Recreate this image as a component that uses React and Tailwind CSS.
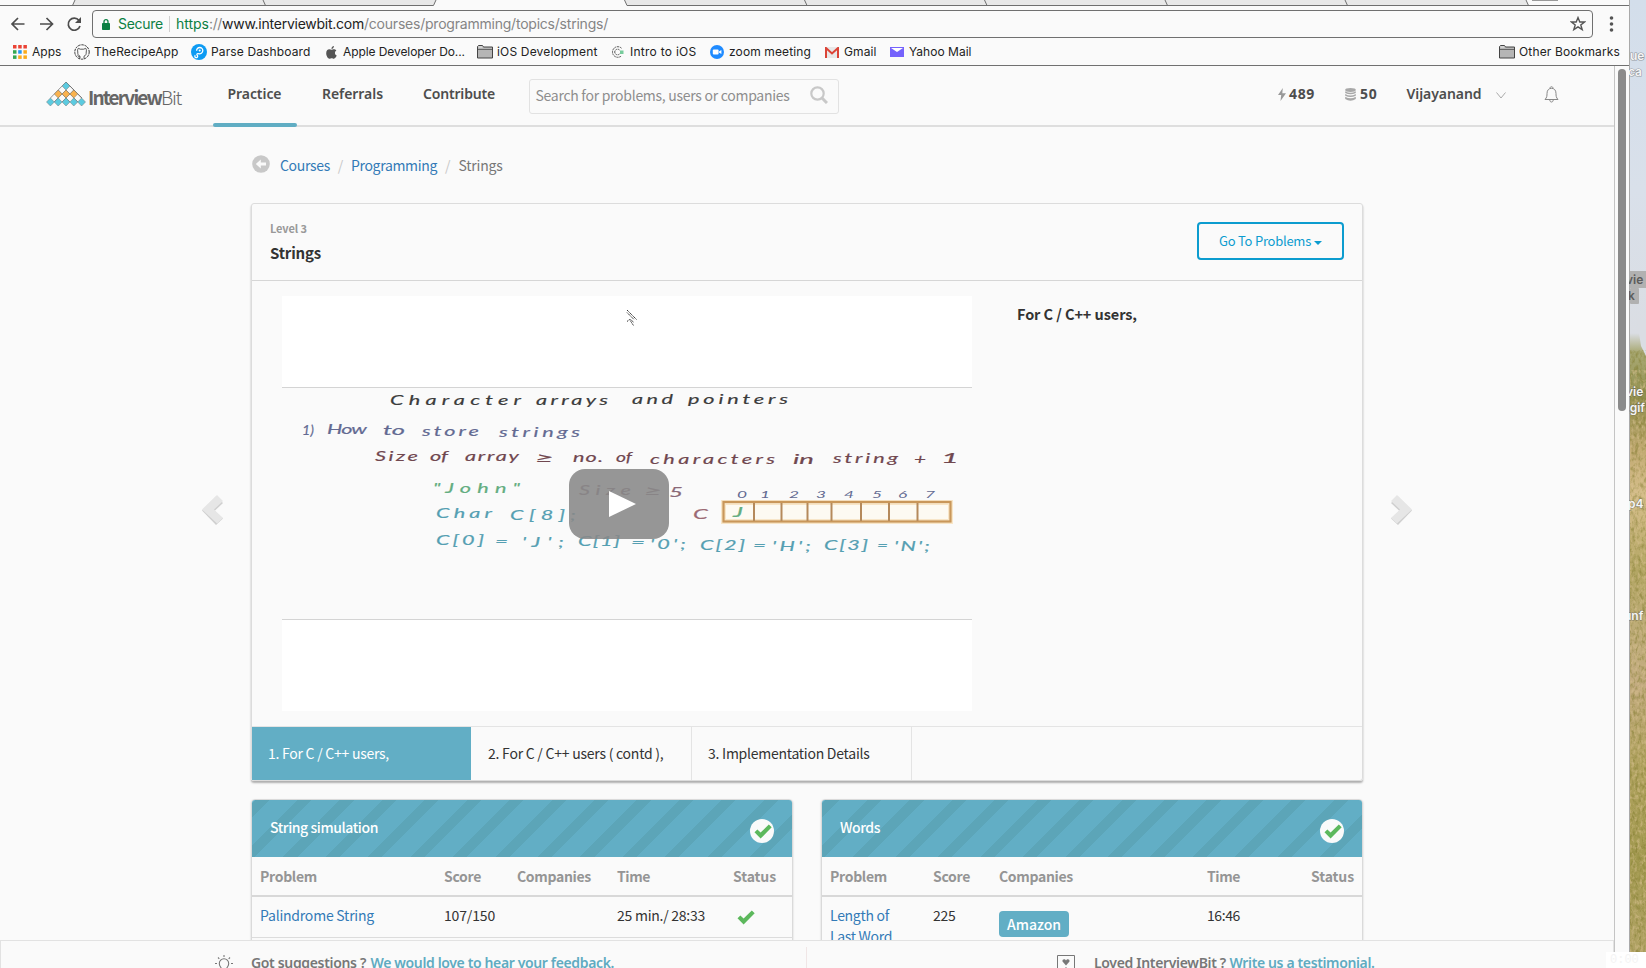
import { useLayoutEffect, useRef } from "react";

const SANS = "font-['Noto_Sans_CJK_SC',sans-serif]";
const ROUND = "font-['Noto_Sans','Open_Sans',sans-serif]";
const CHROME = "font-['Inter',sans-serif]";

/* Text set to a known width: the tracking is worked out from the natural width. */
function Fit({ w, className = "", children }) {
  const ref = useRef(null);
  useLayoutEffect(() => {
    const el = ref.current;
    el.style.letterSpacing = "0px";
    const natural = el.getBoundingClientRect().width;
    el.style.letterSpacing = `${(w - natural) / el.textContent.length}px`;
  }, [w]);
  return (
    <span ref={ref} className={`inline-block whitespace-pre ${className}`}>
      {children}
    </span>
  );
}

const Check = ({ className }) => (
  <svg viewBox="0 0 18 15" className={className}>
    <path d="M0.5 8.3 3.4 5.4 6.6 8.6 14.8 0.4 17.7 3.3 6.6 14.6Z" fill="#5cb85c" />
  </svg>
);

const Folder = () => (
  <svg width="16" height="14" viewBox="0 0 16 14">
    <path d="M.5 13V1.5L1.5.5h4l1 1.5h9v11z" fill="#b5b5b5" stroke="#444" />
    <path d="M1 4.5h14" stroke="#666" />
    <path d="M1.5 2h4" stroke="#eee" />
  </svg>
);

function TabStrip() {
  return (
    <svg width="1629" height="6" className="block shrink-0">
      <path d="M72.500 5.500 75 0H436L433.500 5.500ZM627 5.500 624.500 0H1526L1528.500 5.500Z" fill="#e8e8e8" />
      <path
        d="M0 5.500H433.500L436 0M72.500 5.500 75 0M263 0 265.500 5.500M624.500 0 627 5.500H1629M804.500 0 807 5.500M984.500 0 987 5.500M1165 0 1167.500 5.500M1345 0 1347.500 5.500M1526 0 1528.500 5.500"
        fill="none"
        stroke="#6f6f6f"
      />
      <path d="M1532 .5H1558" stroke="#999" />
    </svg>
  );
}

function Toolbar() {
  return (
    <div className={`flex h-[36px] items-center ${CHROME}`}>
      <svg width="92" height="36" viewBox="0 6 92 36" fill="none" stroke="#4d4d4d" strokeWidth="1.7" className="shrink-0">
        <path d="M24.500 24H12.500M18 18 12 24 18 30M40 24H52M46.500 18 52.500 24 46.500 30" />
        <path d="M79 20.500A6 6 0 1 0 80 26" />
        <path d="M81 17V23H75Z" fill="#4d4d4d" stroke="none" />
      </svg>
      <div className="flex h-[28px] w-[1501px] items-center rounded-[4px] border border-[#707070] text-[14px] leading-[26px]">
        <svg width="8" height="11" viewBox="0 0 8 11" className="ml-[9px]">
          <rect y="4" width="8" height="7" rx=".8" fill="#0b8043" />
          <path d="M2 4.500V2.700a2 2 0 0 1 4 0V4.500" fill="none" stroke="#0b8043" strokeWidth="1.300" />
        </svg>
        <Fit w={45} className="ml-[8px] text-[#0b8043]">Secure</Fit>
        <span className="ml-[6px] mr-[6px] h-[16px] w-px bg-[#d0d0d0]" />
        <Fit w={33} className="text-[#0b8043]">https</Fit>
        <Fit w={13} className="text-[#858585]">://</Fit>
        <Fit w={142} className="text-[#222]">www.interviewbit.com</Fit>
        <Fit w={244} className="text-[#858585]">/courses/programming/topics/strings/</Fit>
        <svg width="16" height="16" viewBox="0 0 16 16" className="ml-auto mr-[6px]">
          <path d="M8 1.600 9.800 6H14.500L10.800 8.900 12.200 13.600 8 10.800 3.800 13.600 5.200 8.900 1.500 6H6.200Z" fill="none" stroke="#555" strokeWidth="1.400" />
        </svg>
      </div>
      <svg width="5" height="16" className="ml-[16px]" fill="#555">
        <circle cx="2.500" cy="2" r="1.800" />
        <circle cx="2.500" cy="8" r="1.800" />
        <circle cx="2.500" cy="14" r="1.800" />
      </svg>
    </div>
  );
}

const dots = ["#ea4335", "#ea4335", "#ea4335", "#34a853", "#2196f3", "#fbab1a", "#34a853", "#fbab1a", "#fbab1a"];

const bookmarks = [
  {
    label: "Apps", w: 29.500, box: "w-[61px]", iconBox: "w-[19px]",
    icon: (
      <svg width="14" height="14" viewBox="0 0 14 14">
        {dots.map((c, i) => (
          <rect key={i} x={(i % 3) * 5.2} y={Math.floor(i / 3) * 5.2} width="3.500" height="3.500" fill={c} />
        ))}
      </svg>
    ),
  },
  {
    label: "TheRecipeApp", w: 84.500, box: "w-[117px]", iconBox: "w-[20px]",
    icon: (
      <svg width="16" height="16" viewBox="0 0 16 16" fill="none" stroke="#333">
        <circle cx="8" cy="8" r="7.200" strokeDasharray="2.500 .8" />
        <path d="M6 14.500V12.200C4 11.500 3.600 9.800 3.800 8 3.300 6.500 3.700 5 4.300 4.300L6.300 5.200H9.700L11.700 4.300C12.300 5 12.700 6.500 12.200 8 12.400 9.800 12 11.500 10 12.200V14.500M6 13C4.500 13 4.300 12 3.500 11.600" strokeWidth=".8" />
      </svg>
    ),
  },
  {
    label: "Parse Dashboard", w: 99.500, box: "w-[135px]", iconBox: "w-[20px]",
    icon: (
      <svg width="16" height="16" viewBox="0 0 16 16">
        <circle cx="8" cy="8" r="8" fill="#0d9bf3" />
        <path d="M4.300 11.200a1.400 1.400 0 1 0 1.900 0C5.500 10.500 6 9.500 7.200 9.700 9.500 10.200 11.800 9 11.800 6.600 11.800 4.800 10.500 3.500 8.700 3.500 6.800 3.500 5.600 5 5.600 6.800" fill="none" stroke="#fff" strokeWidth="1.300" />
        <circle cx="8.700" cy="6.600" r="1" fill="#fff" />
      </svg>
    ),
  },
  {
    label: "Apple Developer Do...", w: 122, box: "w-[151px]", iconBox: "w-[17px]",
    icon: (
      <svg width="11" height="13" viewBox="0 0 11 13" fill="#555">
        <path d="M7.700 3.200C6.700 3.200 6.200 3.700 5.600 3.700 5 3.700 4.300 3.200 3.400 3.200 1.500 3.200.2 4.800.2 7.200.2 9.700 1.900 12.700 3.500 12.700 4.300 12.700 4.700 12.200 5.700 12.200 6.600 12.200 6.900 12.700 7.800 12.700 9.200 12.700 10.300 10.700 10.700 9.500 8.400 8.500 8.500 5.300 10.400 4.500 9.700 3.600 8.800 3.200 7.700 3.200ZM5.500 3C5.400 1.500 6.400.3 7.900.1 8.100 1.600 6.900 3 5.500 3Z" />
      </svg>
    ),
  },
  { label: "iOS Development", w: 100.500, box: "w-[134px]", iconBox: "w-[20px]", icon: <Folder /> },
  {
    label: "Intro to iOS", w: 66.500, box: "w-[99px]", iconBox: "w-[19px]",
    icon: (
      <svg width="14" height="14" viewBox="0 0 14 14" fill="none">
        <path d="M10.500 3.200A5.300 5.300 0 1 0 10.500 10.800M8.500 5A2.800 2.800 0 1 0 8.500 9" stroke="#555" strokeDasharray="2 .7" />
        <rect x="9" y="5.500" width="3.500" height="3.500" fill="#77cc9c" />
      </svg>
    ),
  },
  {
    label: "zoom meeting", w: 82, box: "w-[115px]", iconBox: "w-[19px]",
    icon: (
      <svg width="14" height="14" viewBox="0 0 14 14">
        <circle cx="7" cy="7" r="7" fill="#1f8bff" />
        <rect x="2.800" y="4.600" width="5.800" height="4.800" rx="1" fill="#fff" />
        <path d="M9 6.600 11.400 4.900V9.100L9 7.400Z" fill="#fff" />
      </svg>
    ),
  },
  {
    label: "Gmail", w: 32.500, box: "w-[65px]", iconBox: "w-[19px]",
    icon: (
      <svg width="14" height="11" viewBox="0 0 14 11">
        <rect width="14" height="11" fill="#e8e8e8" />
        <path d="M1 11V1L7 6.500 13 1V11" fill="none" stroke="#db4437" strokeWidth="2" />
      </svg>
    ),
  },
  {
    label: "Yahoo Mail", w: 62.500, box: "w-[90px]", iconBox: "w-[19px]",
    icon: (
      <svg width="14" height="10" viewBox="0 0 14 10">
        <rect width="14" height="10" fill="#7562fc" />
        <path d="M1 1H13L7 5Z" fill="#fff" />
      </svg>
    ),
  },
];

function BookmarkBar() {
  return (
    <div className={`flex h-[24px] items-center border-b border-[#707070] pb-[3px] pl-[13px] pr-[9px] text-[12px] leading-[18px] text-[#222] ${CHROME}`}>
      {bookmarks.map((b) => (
        <div key={b.label} className={`flex shrink-0 items-center ${b.box}`}>
          <span className={`shrink-0 ${b.iconBox}`}>{b.icon}</span>
          <Fit w={b.w}>{b.label}</Fit>
        </div>
      ))}
      <div className="ml-auto flex items-center gap-[4px]">
        <Folder />
        <Fit w={101}>Other Bookmarks</Fit>
      </div>
    </div>
  );
}

const logoCells = [
  [20, 4, "#5ccbe0"],
  [12.2, 12, "#f9b24e"], [20, 12, "#f9b24e"], [27.8, 12, "#f9b24e"],
  [4.4, 20, "#5ccbe0"], [12.2, 20, "#5ccbe0"], [20, 20, "#5ccbe0"], [27.8, 20, "#5ccbe0"], [35.6, 20, "#5ccbe0"],
];

function Logo() {
  return (
    <div className="flex w-[167px] items-center pl-[46px]">
      <svg width="40" height="25" viewBox="0 0 40 25" className="-mt-[2px] shrink-0">
        <path d="M4.400 16 20 0 35.600 16M12.200 8 24 20M27.800 8 16 20M20 0 36 16M8 20 20 8 32 20" fill="none" stroke="#666" strokeWidth=".7" />
        {logoCells.map(([x, y, c]) => (
          <path key={`${x}-${y}`} d={`M${x} ${y - 4}L${x + 3.9} ${y}L${x} ${y + 4}L${x - 3.9} ${y}Z`} fill={c} stroke="#777" strokeWidth=".5" />
        ))}
      </svg>
      <span className={`ml-[2px] mt-[3px] flex text-[19px] leading-[24px] text-[#666] ${SANS}`}>
        <Fit w={73} className="font-bold">Interview</Fit>
        <Fit w={20} className="font-light">Bit</Fit>
      </span>
    </div>
  );
}

function SiteHeader() {
  return (
    <div className={`flex h-[61px] shrink-0 items-stretch border-b-2 border-[#dedede] text-[14px] font-semibold text-[#4d4d4d] ${ROUND}`}>
      <Logo />
      <div className="relative ml-[46px] w-[84px] pl-[14.500px] pt-[18px] leading-[20px]">
        <Fit w={54}>Practice</Fit>
        <span className="absolute -bottom-[2px] left-0 h-[4px] w-[84px] rounded-[2px] bg-[#60adc3]" />
      </div>
      <div className="ml-[25px] w-[101px] pt-[18px] leading-[20px]"><Fit w={61}>Referrals</Fit></div>
      <div className="w-[106px] pt-[18px] leading-[20px]"><Fit w={72}>Contribute</Fit></div>
      <div className={`mt-[13px] flex h-[35px] w-[310px] items-center justify-between rounded-[3px] border border-[#e2e2e2] pl-[5.500px] pr-[10px] text-[14px] font-normal leading-[30px] text-[#8e8e8e] ${SANS}`}>
        <Fit w={254} className="-mt-[3px]">Search for problems, users or companies</Fit>
        <svg width="18" height="18" viewBox="0 0 18 18" fill="none" stroke="#c8c8c8" strokeWidth="2.200" className="mb-[3px]">
          <circle cx="7.500" cy="7.500" r="6.200" />
          <path d="M12 12 17 17" strokeWidth="3" />
        </svg>
      </div>
      <div className="ml-[439px] flex h-[56px] items-center leading-[20px]">
        <svg width="8" height="13" viewBox="0 0 8 13" fill="#999"><path d="M4.800 0 0 7H3.200L2.500 13 8 5.200H4.300Z" /></svg>
        <Fit w={26} className="ml-[3px] font-bold">489</Fit>
        <svg width="11" height="13" viewBox="0 0 11 13" fill="#a8a8a8" className="ml-[30px]">
          <ellipse cx="5.500" cy="2" rx="5.300" ry="1.900" />
          <path d="M.2 3.300Q5.500 6.300 10.800 3.300V5Q5.500 7.700.2 5ZM.2 6Q5.500 9 10.800 6V7.700Q5.500 10.400.2 7.700ZM.2 8.800Q5.500 11.800 10.800 8.800V11Q5.500 14.500.2 11Z" />
        </svg>
        <Fit w={17.500} className="ml-[4px] font-bold">50</Fit>
        <Fit w={75} className="ml-[29px]">Vijayanand</Fit>
        <svg width="10" height="7" viewBox="0 0 10 7" fill="none" stroke="#aaa" className="ml-[14px] mt-[2px]"><path d="M.5.5 5 6 9.500.5" /></svg>
        <svg width="15" height="17" viewBox="0 0 15 17" fill="none" stroke="#888" className="ml-[38px]">
          <path d="M6 2.200C6 .2 9 .2 9 2.200M1 13.500C3 11.500 3 9.500 3 7.500 3 4 5 2.300 7.500 2.300S12 4 12 7.500C12 9.500 12 11.500 14 13.500ZM5.800 14C5.800 16.700 9.200 16.700 9.200 14" />
        </svg>
      </div>
    </div>
  );
}

function Breadcrumb() {
  return (
    <div className={`flex h-[24px] items-center pl-[252px] text-[14px] leading-[24px] text-[#337ab7] ${SANS}`}>
      <svg width="18" height="18" viewBox="0 0 18 18" className="-mt-[2px] mr-[10px]">
        <circle cx="9" cy="9" r="8.800" fill="#c8c8c8" />
        <path d="M3.800 9 8.800 4.500V7.500H14V10.500H8.800V13.500Z" fill="#fafafa" />
      </svg>
      <Fit w={50}>Courses</Fit>
      <span className="w-[21px] text-center text-[#c8c8c8]">/</span>
      <Fit w={86}>Programming</Fit>
      <span className="w-[21.500px] text-center text-[#c8c8c8]">/</span>
      <Fit w={44} className="text-[#777]">Strings</Fit>
    </div>
  );
}

const INK = "#3c3c3c", NAVY = "#636a92", PLUM = "#70474f", GREEN = "#63ad80", TEAL = "#559fb2";

/* word, left, right, baseline, colour */
const words = [
  ["Character", 390, 521, 405, INK], ["arrays", 536, 608, 405, INK], ["and", 632, 673, 404, INK], ["pointers", 688, 788, 404, INK],
  ["1)", 302, 314, 435, NAVY], ["How", 327, 367, 434, NAVY], ["to", 383, 405, 435, NAVY], ["store", 422, 479, 436, NAVY], ["strings", 499, 580, 437, NAVY],
  ["Size", 375, 418, 461, PLUM], ["of", 430, 448, 461, PLUM], ["array", 465, 519, 461, PLUM], ["≥", 535, 554, 463, PLUM], ["no.", 573, 603, 462, PLUM],
  ["of", 616, 632, 462, PLUM], ["characters", 650, 775, 464, PLUM], ["in", 793, 814, 464, PLUM], ["string", 833, 898, 463, PLUM], ["+", 914, 926, 464, PLUM], ["1", 941, 959, 463, PLUM],
  ["\"John\"", 433, 520, 493, GREEN], ["Size", 579, 631, 495, "#8a6a78"], ["≥", 644, 662, 496, "#8a6a78"], ["5", 669, 683, 497, "#8a6a78"],
  ["Char", 436, 492, 518, TEAL], ["C[8];", 510, 576, 520, TEAL], ["C", 693, 708, 519, "#9c6a74"],
  ["C[0]", 436, 484, 545, TEAL], ["=", 495, 508, 546, TEAL], ["'J';", 522, 564, 547, TEAL],
  ["C[1]", 578, 620, 546, TEAL], ["=", 631, 645, 547, TEAL], ["'0';", 650, 686, 549, TEAL],
  ["C[2]", 700, 745, 550, TEAL], ["=", 753, 766, 550, TEAL], ["'H';", 772, 811, 551, TEAL],
  ["C[3]", 824, 868, 550, TEAL], ["=", 877, 888, 550, TEAL], ["'N';", 894, 930, 551, TEAL],
  ["J", 733, 743, 517, GREEN],
];
const indexes = [737, 760, 789, 816, 844, 872, 898, 925];
const walls = [754, 781.5, 807.5, 831.5, 861, 889, 917.5];

function Video() {
  return (
    <div className="flex h-[415px] w-[690px] flex-col">
      <div className="h-[92px] border-b border-[#d4d4d4] bg-white" />
      <div className="relative h-[231px]">
        <svg width="690" height="231" viewBox="282 388 690 231" className="block">
          <rect x="723.500" y="502.500" width="227" height="19" fill="#fdfaf2" stroke="#f8e6c8" strokeWidth="5" />
          <rect x="723.500" y="502" width="227" height="19.500" fill="none" stroke="#c9975a" strokeWidth="2.200" />
          {walls.map((x) => <path key={x} d={`M${x} 503V521`} stroke="#b58a5c" strokeWidth="2" />)}
          <g className="font-['Lato','DejaVu_Sans',sans-serif] italic" fontSize="15.500">
            {words.map(([t, a, b, y, c], i) => (
              <text key={i} transform={`translate(${a} ${y}) scale(1.4 .9)`} fill={c} stroke={c} strokeWidth=".2" textLength={(b - a) / 1.4} lengthAdjust={t.length > 2 ? "spacing" : "spacingAndGlyphs"}>
                {t}
              </text>
            ))}
            {indexes.map((x, i) => (
              <text key={x} transform={`translate(${x} 498) scale(1.5 .8)`} fontSize="11.500" fill={NAVY}>{i}</text>
            ))}
          </g>
        </svg>
        <button className="absolute left-[287px] top-[81px] flex h-[70px] w-[100px] items-center justify-center rounded-[16px] bg-[#888]/88">
          <svg width="27" height="26" viewBox="0 0 27 26" className="ml-[6px]"><path d="M0 0 27 13 0 26Z" fill="#fff" /></svg>
        </button>
      </div>
      <div className="h-[92px] border-t border-[#d4d4d4] bg-white" />
    </div>
  );
}

const Chevron = ({ flip }) => (
  <svg width="21" height="30" viewBox="0 0 21 30" className={`mt-[215px] shrink-0 ${flip ? "-scale-x-100" : ""}`}>
    <path d="M0 8 7 1.500 21 15.500 7 30 0 23.500 8.500 16Z" fill="#cfcfcf" />
    <path d="M0 6 6 0 21 14.500 6 28.500 0 23 9 14.500Z" fill="#e6e6e6" />
  </svg>
);

function Lesson() {
  return (
    <div className="mt-[26px] flex pl-[202px]">
      <div className="mt-[77px]"><Chevron flip /></div>
      <div className={`ml-[28px] flex h-[578px] w-[1112px] shrink-0 flex-col rounded-[3px] border border-[#dcdcdc] shadow-[0_2px_2px_rgba(0,0,0,0.3)] ${SANS}`}>
        <div className="flex h-[77px] shrink-0 items-start justify-between border-b border-[#d6d6d6] pl-[18px] pr-[18px] pt-[18px]">
          <div className="-mt-px flex flex-col font-bold">
            <Fit w={37} className="self-start text-[11px] leading-[14px] text-[#999]">Level 3</Fit>
            <Fit w={51} className="mt-[6px] self-start text-[15px] leading-[24px] text-[#333]">Strings</Fit>
          </div>
          <button className="flex h-[38px] w-[147px] items-center rounded-[4px] border-2 border-[#0c9ccf] pl-[20px] text-[13px] leading-[34px] text-[#0c9ccf]">
            <Fit w={92}>Go To Problems</Fit>
            <svg width="8" height="4" viewBox="0 0 8 4" className="ml-[3px] mt-[3px]"><path d="M0 0H8L4 4Z" fill="#0c9ccf" /></svg>
          </button>
        </div>
        <div className="flex h-[445px] shrink-0 pl-[30px] pt-[15px]">
          <Video />
          <div className="ml-[45px] mt-[6px] text-[14.500px] font-bold leading-[24px] text-[#333]">
            <Fit w={120}>For C / C++ users,</Fit>
          </div>
        </div>
        <div className="flex h-[54px] border-t border-[#e4e4e4] text-[14px] leading-[53px] text-[#333]">
          <div className="w-[219px] bg-[#62aec5] pl-[16px] text-white"><Fit w={121}>1. For C / C++ users,</Fit></div>
          <div className="w-[221px] border-r border-[#e4e4e4] pl-[17px]"><Fit w={175.500}>2. For C / C++ users ( contd ),</Fit></div>
          <div className="w-[220px] border-r border-[#e4e4e4] pl-[16px]"><Fit w={161.500}>3. Implementation Details</Fit></div>
        </div>
      </div>
      <div className="ml-[28px] mt-[77px]"><Chevron /></div>
    </div>
  );
}

function ProblemCard({ title, titleW, cols, head, children }) {
  return (
    <div className="flex h-[180px] w-[542px] shrink-0 flex-col rounded-t-[4px] border border-[#dadada] text-[14px] leading-[21px] shadow-[0_1px_2px_rgba(0,0,0,0.2)]">
      <div className="flex h-[57px] shrink-0 items-center justify-between rounded-t-[3px] bg-[repeating-linear-gradient(-45deg,#62aec5_0_20px,#5ca5b8_20px_30px)] pl-[18px] pr-[18px] text-white">
        <Fit w={titleW} className="-mt-[2px] font-medium">{title}</Fit>
        <span className="mt-[5px] flex h-[24px] w-[24px] items-center justify-center rounded-full bg-[#fafafa]">
          <Check className="ml-px h-[15px] w-[18px]" />
        </span>
      </div>
      <div className={`grid h-[40px] shrink-0 items-center border-b-2 border-[#d8d8d8] pl-[8px] font-bold text-[#959595] ${cols}`}>
        {head.map(([t, w]) => <span key={t}><Fit w={w}>{t}</Fit></span>)}
      </div>
      <div className={`grid items-start pl-[8px] pt-[8px] text-[#333] ${cols}`}>{children}</div>
    </div>
  );
}

function Problems() {
  return (
    <div className={`mt-[18px] flex gap-[28px] pl-[251px] ${SANS}`}>
      <ProblemCard
        title="String simulation" titleW={108} cols="grid-cols-[184px_73px_100px_116px_60px]"
        head={[["Problem", 57], ["Score", 37], ["Companies", 74], ["Time", 33], ["Status", 43]]}
      >
        <span className="text-[#337ab7]"><Fit w={114}>Palindrome String</Fit></span>
        <span><Fit w={51}>107/150</Fit></span>
        <span />
        <span><Fit w={88}>25 min./ 28:33</Fit></span>
        <Check className="ml-[4px] mt-[5px] h-[15px] w-[18px]" />
        <span className="col-span-5 -ml-[8px] mt-[11px] h-px bg-[#dcdcdc]" />
      </ProblemCard>
      <ProblemCard
        title="Words" titleW={40} cols="grid-cols-[103px_66px_208px_104px_50px]"
        head={[["Problem", 57], ["Score", 37], ["Companies", 74], ["Time", 33], ["Status", 43]]}
      >
        <span className="flex flex-col items-start text-[#337ab7]"><Fit w={59}>Length of</Fit><Fit w={62}>Last Word</Fit></span>
        <span><Fit w={22.500}>225</Fit></span>
        <span className="mt-[6px] flex h-[26px] w-[70px] items-center rounded-[4px] bg-[#62aec5] pl-[8px] font-medium text-white"><Fit w={54}>Amazon</Fit></span>
        <span><Fit w={33}>16:46</Fit></span>
      </ProblemCard>
    </div>
  );
}

function FeedbackBar() {
  return (
    <div className={`flex h-[28px] shrink-0 border border-b-0 border-[#e2e2e2] bg-[#fafafa] text-[14px] font-semibold leading-[20px] text-[#777] ${ROUND}`}>
      <div className="mt-[6px] flex w-[806px] items-start border-r border-[#f0e6e6] pl-[214px] pt-[6px]">
        <svg width="18" height="20" viewBox="0 0 18 20" fill="none" stroke="#777" strokeWidth="1.100" className="mt-[2px]">
          <path d="M6.500 14C6.500 12.500 4.300 11.500 4.300 8.500A4.700 4.700 0 0 1 13.700 8.500C13.700 11.500 11.500 12.500 11.500 14M9 0V2M3 2.500 4.300 3.800M15 2.500 13.700 3.800M0 8.500H2M16 8.500H18" />
        </svg>
        <Fit w={115} className="ml-[18px]">Got suggestions ?</Fit>
        <Fit w={243.500} className="ml-[4.500px] text-[#5fabc1]">We would love to hear your feedback.</Fit>
      </div>
      <div className="flex items-start pl-[250px] pt-[12px]">
        <svg width="18" height="17" viewBox="0 0 18 17" fill="none" className="mt-[2px]">
          <path d="M.5 16V.5H17.500V16" stroke="#777" />
          <path d="M9 10.500 5.500 6.500C5 4 8 3.500 9 5.500 10 3.500 13 4 12.500 6.500Z" fill="#777" />
          <path d="M5.500 16 9 12 12.500 16" stroke="#bbb" />
        </svg>
        <Fit w={132} className="ml-[19px]">Loved InterviewBit ?</Fit>
        <Fit w={145} className="ml-[3.500px] text-[#5fabc1]">Write us a testimonial.</Fit>
      </div>
    </div>
  );
}

function Desktop() {
  return (
    <svg width="17" height="968" className="block shrink-0">
      <defs>
        <linearGradient id="scene" x1="0" y1="0" x2="0" y2="952" gradientUnits="userSpaceOnUse">
          <stop offset="0" stopColor="#d3deeb" />
          <stop offset=".2" stopColor="#d9e0ea" />
          <stop offset=".35" stopColor="#dadde3" />
          <stop offset=".37" stopColor="#a9a974" />
          <stop offset=".42" stopColor="#8f8d4c" />
          <stop offset=".47" stopColor="#bfa870" />
          <stop offset=".52" stopColor="#d6be8b" />
          <stop offset=".6" stopColor="#b3a664" />
          <stop offset=".67" stopColor="#bfac7a" />
          <stop offset=".72" stopColor="#c3ab80" />
          <stop offset=".8" stopColor="#b1a360" />
          <stop offset=".9" stopColor="#a39a50" />
          <stop offset="1" stopColor="#b0a264" />
        </linearGradient>
        <filter id="shade" x="0" y="0" width="1" height="1" colorInterpolationFilters="sRGB">
          <feTurbulence type="fractalNoise" baseFrequency=".3 .18" numOctaves="3" seed="4" />
          <feColorMatrix values="0 0 0 0 .5 0 0 0 0 .48 0 0 0 0 .18 3 0 0 0 -1.3" />
        </filter>
        <filter id="shine" x="0" y="0" width="1" height="1" colorInterpolationFilters="sRGB">
          <feTurbulence type="fractalNoise" baseFrequency=".35 .2" numOctaves="3" seed="9" />
          <feColorMatrix values="0 0 0 0 .84 0 0 0 0 .75 0 0 0 0 .56 0 3 0 0 -1.4" />
        </filter>
      </defs>
      <rect width="17" height="952" fill="url(#scene)" />
      <path d="M8 320H17V356L12 346Z" fill="#dadde3" />
      <rect y="350" width="17" height="602" filter="url(#shade)" opacity=".5" />
      <rect y="370" width="17" height="582" filter="url(#shine)" opacity=".6" />
      <rect width="1" height="952" fill="#a9a9a9" />
      <rect x="1" y="271" width="16" height="17" fill="#b1b1b1" />
      <rect x="1" y="288" width="9" height="16" rx="1" fill="#b1b1b1" />
      <g className={CHROME} fontSize="12" fontWeight="600" fill="#f5f5f5" stroke="#55555588" strokeWidth="1.200" paintOrder="stroke">
        <text x="1" y="60">ue</text>
        <text x="-1" y="76">ca</text>
        <text x="-3" y="412" textLength="19">.gif</text>
        <text x="-3" y="396">vie</text>
        <text x="-1" y="508">p4</text>
        <text x="-5" y="620">unf</text>
      </g>
      <g className={CHROME} fontSize="12" fontWeight="600" fill="#5c5c5c">
        <text x="-3" y="284">vie</text>
        <text x="-1" y="300">k</text>
      </g>
      <rect y="952" width="17" height="16" fill="#fff" />
    </svg>
  );
}

export default function App() {
  return (
    <div className="relative flex h-[968px] w-[1646px] overflow-hidden bg-[#fafafa]">
      <div className="flex w-[1629px] shrink-0 flex-col">
        <TabStrip />
        <Toolbar />
        <BookmarkBar />
        <div className="flex h-[902px]">
          <div className="flex w-[1614px] shrink-0 flex-col">
            <SiteHeader />
            <main className="h-[813px] overflow-hidden pt-[26px]">
              <Breadcrumb />
              <Lesson />
              <Problems />
            </main>
            <FeedbackBar />
          </div>
          <div className="w-[15px] border-l border-[#c4c4c4] pl-[3px] pt-[3px]">
            <div className="h-[342px] w-[8px] rounded-full bg-[#8b8b8b]" />
          </div>
        </div>
      </div>
      <Desktop />
      <svg width="12" height="18" viewBox="0 0 12 18" className="absolute left-[626px] top-[309px]" fill="none" stroke="#333" strokeWidth="1">
        <path d="M1 1 10.500 10.500M1 3.500 8 10.500" strokeDasharray="1.500 .5" />
        <path d="M1 12.500 3.500 10.500 7.500 16.500M4.500 10.500 8 13.500" strokeDasharray="1.500 .7" />
      </svg>
      <span className="absolute bottom-0 right-0 h-[16px] w-[40px] bg-white pl-[4px] font-['Liberation_Mono',monospace] text-[12px] leading-[16px] text-[#f4f4f4]">0:00</span>
    </div>
  );
}
